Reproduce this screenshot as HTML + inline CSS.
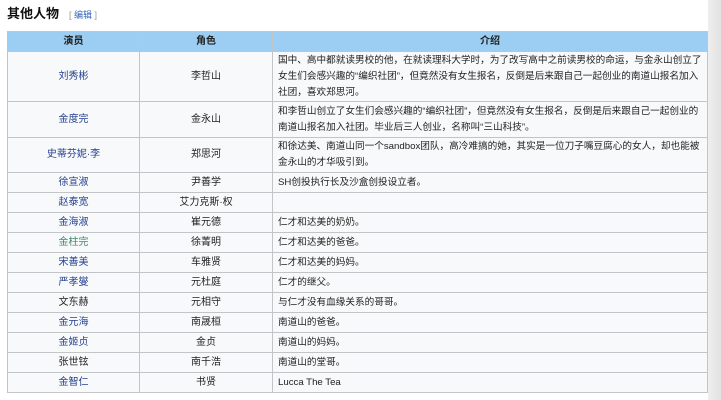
<!DOCTYPE html>
<html><head><meta charset="utf-8"><style>
body{margin:0;width:721px;height:400px;background:#fff;font-family:"Liberation Sans","Noto Sans CJK SC",sans-serif;font-size:10px;color:#222;position:relative;overflow:hidden}
h2{position:absolute;left:7px;top:3px;margin:0;font-size:13px;font-weight:bold;color:#111}
h2 span{font-weight:normal;font-size:9px;color:#3366bb;margin-left:10px}
h2 span i{color:#999;font-style:normal}
table{position:absolute;left:7px;top:31px;border-collapse:collapse;width:701px;background:#f8f9fa;table-layout:fixed}
td,th{border:1px solid #c2c4c8;padding:0 5px;line-height:16px;vertical-align:middle}
td.c{font-size:9.65px;white-space:nowrap;overflow:hidden;line-height:16px}
th{background:#9ccdf2;height:19px;font-weight:bold;font-size:10px}
td.a,td.b{text-align:center}
td.a{color:#25408f}
tr.s td{height:19px}
.g{color:#3b8a66!important}.k{color:#222!important}
.edge{position:absolute;right:0;top:0;width:13px;height:400px;background:linear-gradient(90deg,#eee,#e2e2e2)}
</style></head><body>
<h2>其他人物<span><i>[</i> 编辑 <i>]</i></span></h2>
<table>
<colgroup><col style="width:132px"><col style="width:133px"><col></colgroup>
<tr><th>演员</th><th>角色</th><th>介绍</th></tr>
<tr><td class="a" style="height:49px">刘秀彬</td><td class="b">李哲山</td><td class="c">国中、高中都就读男校的他，在就读理科大学时，为了改写高中之前读男校的命运，与金永山创立了<br>女生们会感兴趣的“编织社团”，但竟然没有女生报名，反倒是后来跟自己一起创业的南道山报名加入<br>社团，喜欢郑思河。</td></tr>
<tr><td class="a" style="height:35px">金度完</td><td class="b">金永山</td><td class="c">和李哲山创立了女生们会感兴趣的“编织社团”，但竟然没有女生报名，反倒是后来跟自己一起创业的<br>南道山报名加入社团。毕业后三人创业，名称叫“三山科技”。</td></tr>
<tr><td class="a" style="height:34px">史蒂芬妮·李</td><td class="b">郑思河</td><td class="c">和徐达美、南道山同一个sandbox团队，高冷难搞的她，其实是一位刀子嘴豆腐心的女人，却也能被<br>金永山的才华吸引到。</td></tr>
<tr class="s"><td class="a">徐宣淑</td><td class="b">尹善学</td><td class="c">SH创投执行长及沙盒创投设立者。</td></tr>
<tr class="s"><td class="a">赵泰宽</td><td class="b">艾力克斯·权</td><td class="c"></td></tr>
<tr class="s"><td class="a">金海淑</td><td class="b">崔元德</td><td class="c">仁才和达美的奶奶。</td></tr>
<tr class="s"><td class="a g">金柱完</td><td class="b">徐菁明</td><td class="c">仁才和达美的爸爸。</td></tr>
<tr class="s"><td class="a">宋善美</td><td class="b">车雅贤</td><td class="c">仁才和达美的妈妈。</td></tr>
<tr class="s"><td class="a">严孝燮</td><td class="b">元杜庭</td><td class="c">仁才的继父。</td></tr>
<tr class="s"><td class="a k">文东赫</td><td class="b">元相守</td><td class="c">与仁才没有血缘关系的哥哥。</td></tr>
<tr class="s"><td class="a">金元海</td><td class="b">南晟桓</td><td class="c">南道山的爸爸。</td></tr>
<tr class="s"><td class="a">金姬贞</td><td class="b">金贞</td><td class="c">南道山的妈妈。</td></tr>
<tr class="s"><td class="a k">张世铉</td><td class="b">南千浩</td><td class="c">南道山的堂哥。</td></tr>
<tr class="s"><td class="a">金智仁</td><td class="b">书贤</td><td class="c">Lucca The Tea</td></tr>
</table>
<div class="edge"></div>
</body></html>
